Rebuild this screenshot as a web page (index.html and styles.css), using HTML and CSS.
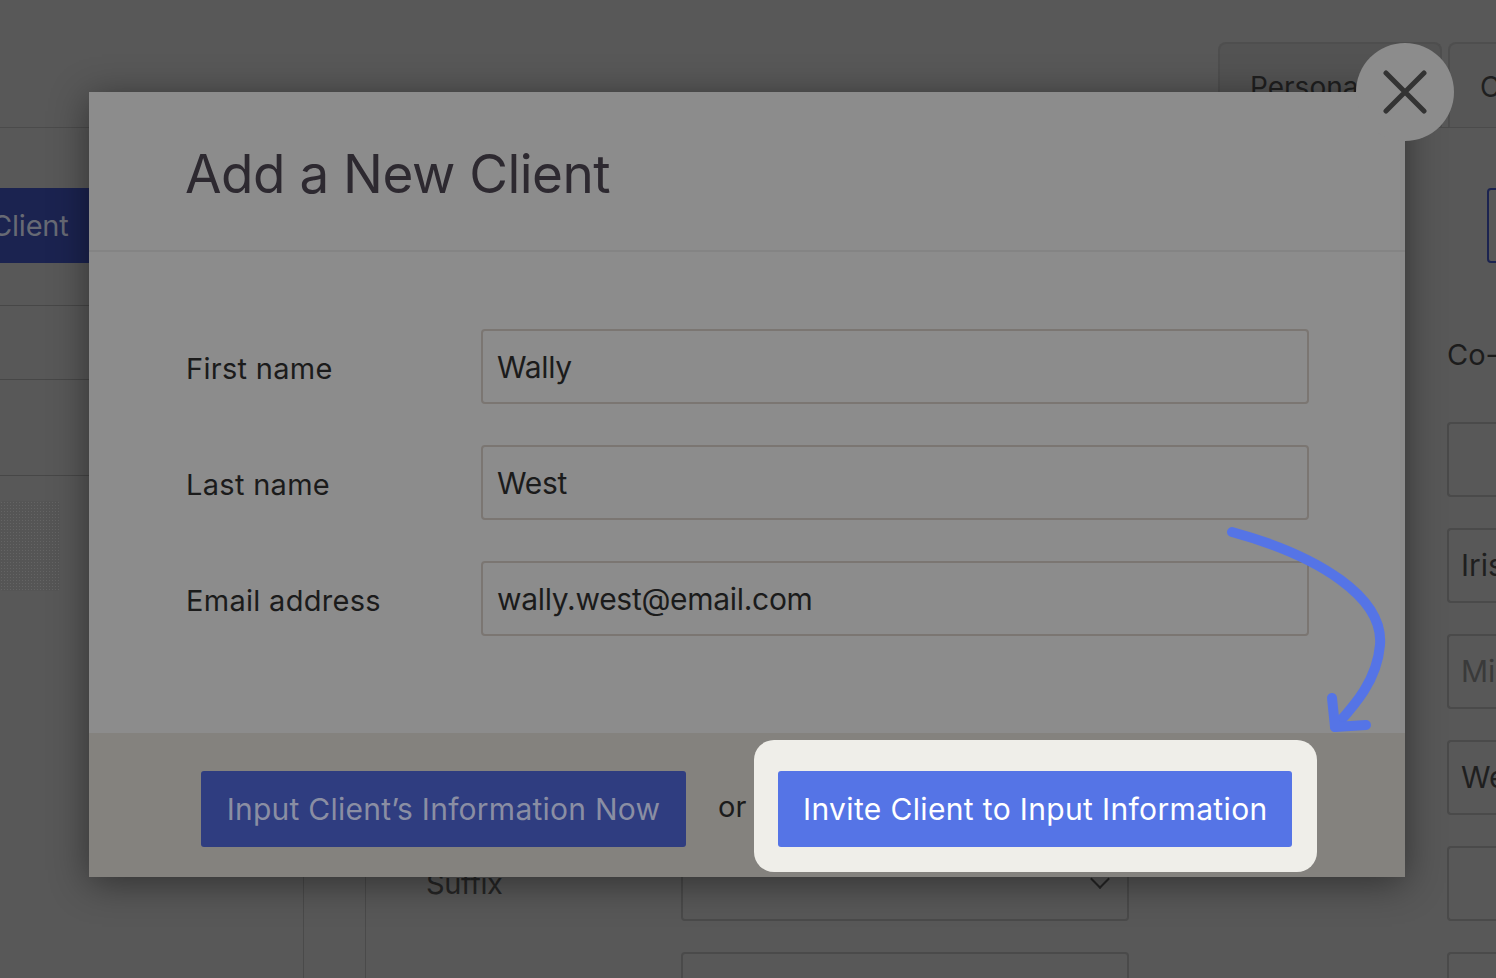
FILE: index.html
```html
<!doctype html>
<html lang="en">
<head>
    <meta charset="UTF-8">
    <meta name="viewport" content="width=device-width, initial-scale=1.0">
    <title>Add a New Client</title>
    <link rel="stylesheet" href="styles.css">
</head>
<body>
<header class="topbar">
    <div class="tabs">
        <div class="tab tab-active">Personal</div>
        <div class="tab">C</div>
    </div>
</header>
<div class="app">
    <aside class="side">
        <div class="side-item side-item-btn"><span class="side-btn">Client</span></div>
        <div class="side-item side-item-a"></div>
        <div class="side-item side-item-b"></div>
        <div class="side-item side-item-c"><div class="dots"></div></div>
    </aside>
    <div class="rail"></div>
    <main class="main">
        <div class="form-col">
            <div class="block"></div>
            <div class="heading"></div>
            <div class="row"><span class="row-label"></span><div class="field"></div></div>
            <div class="row"><span class="row-label"></span><div class="field"></div></div>
            <div class="row"><span class="row-label"></span><div class="field"></div></div>
            <div class="row"><span class="row-label"></span><div class="field"></div></div>
            <div class="row"><span class="row-label">Suffix</span><div class="field select"><span class="chev"></span></div></div>
            <div class="row"><span class="row-label"></span><div class="field select"></div></div>
        </div>
        <div class="co-col">
            <div class="block block-outline"></div>
            <div class="heading">Co-</div>
            <div class="co-field"></div>
            <div class="co-field">Iris</div>
            <div class="co-field co-muted">Mi</div>
            <div class="co-field">We</div>
            <div class="co-field"></div>
            <div class="co-field"></div>
        </div>
    </main>
</div>

<div class="modal">
    <div class="modal-head">
        <h1>Add a New Client</h1>
    </div>
    <div class="modal-body">
        <label class="m-row">
            <span class="m-label">First name</span>
            <span class="m-input">Wally</span>
        </label>
        <label class="m-row">
            <span class="m-label">Last name</span>
            <span class="m-input">West</span>
        </label>
        <label class="m-row">
            <span class="m-label">Email address</span>
            <span class="m-input">wally.west@email.com</span>
        </label>
    </div>
    <div class="modal-foot">
        <button class="btn btn-dark">Input Client’s Information Now</button>
        <span class="or">or</span>
        <div class="spot">
            <button class="btn btn-blue">Invite Client to Input Information</button>
        </div>
    </div>
    <button class="close" aria-label="Close">
        <svg width="44" height="44" viewBox="0 0 44 44">
            <path d="M3 3 L41 41 M41 3 L3 41" stroke="#333" stroke-width="5" stroke-linecap="round" fill="none"/>
        </svg>
    </button>
</div>

<svg class="arrow" width="1496" height="978" viewBox="0 0 1496 978">
    <path d="M1232 532 C1320 556 1384 598 1380 645 C1377 682 1352 708 1335 727"
          stroke="#5574e6" stroke-width="10" stroke-linecap="round" fill="none"/>
    <path d="M1332 698 L1335 727 L1366 725"
          stroke="#5574e6" stroke-width="10" stroke-linecap="round" stroke-linejoin="round" fill="none"/>
</svg>
</body>
</html>
```

FILE: styles.css
```css
html, body {
    margin: 0;
    padding: 0;
}

body {
    width: 1496px;
    height: 978px;
    overflow: hidden;
    position: relative;
    background-color: #585858;
    font-family: Inter, "Open Sans", sans-serif;
    color: #1c1c1c;
}

/* background page (already dimmed) */
.topbar {
    height: 128px;
    box-sizing: border-box;
    border-bottom: 1px solid #4b4b4b;
    overflow: hidden;
}

.tabs {
    display: flex;
    gap: 6px;
    padding: 42px 0 0 1218px;
    height: 100%;
    box-sizing: border-box;
}

.tab {
    flex: none;
    width: 224px;
    box-sizing: border-box;
    padding: 26px 0 0 30px;
    border: 2px solid #4e4e4e;
    border-bottom: none;
    border-radius: 8px 8px 0 0;
    font-size: 28px;
    color: #1f1f1f;
    background-color: #565656;
}

.tab-active {
    background-color: #535353;
}

.app {
    display: flex;
    height: 850px;
}

.side {
    flex: none;
    width: 304px;
    border-right: 1px solid #4a4a4a;
    box-sizing: border-box;
}

.side-item {
    border-bottom: 1px solid #474747;
    box-sizing: border-box;
}

.side-item-btn {
    height: 178px;
    padding-top: 60px;
    overflow: hidden;
}

.side-btn {
    display: block;
    width: 320px;
    height: 75px;
    margin-left: -9px;
    line-height: 75px;
    background-color: #1b2350;
    color: #676a74;
    font-size: 29px;
    letter-spacing: -0.2px;
}

.side-item-a {
    height: 74px;
}

.side-item-b {
    height: 96px;
}

.side-item-c {
    border-bottom: none;
    padding-top: 25px;
}

.dots {
    width: 60px;
    height: 90px;
    border-radius: 4px;
    background-color: #555;
    background-image: radial-gradient(#646464 0.7px, transparent 0.8px);
    background-size: 3px 3px;
}

.rail {
    flex: none;
    width: 61px;
    border-right: 1px solid #4a4a4a;
}

.main {
    flex: 1;
    min-width: 0;
    overflow: hidden;
    display: flex;
    padding-top: 60px;
}

.form-col {
    flex: none;
    width: 764px;
    padding-left: 60px;
    box-sizing: border-box;
    display: flex;
    flex-direction: column;
    gap: 31px;
}

.block {
    height: 75px;
    flex: none;
}

.block-outline {
    width: 100px;
    margin-left: 40px;
    border: 2px solid #1b2350;
    border-radius: 4px;
    box-sizing: border-box;
}

.heading {
    flex: none;
    height: 97px;
    box-sizing: border-box;
    padding-top: 45px;
    font-size: 29px;
    line-height: 32px;
    color: #1c1c1c;
}

.row {
    flex: none;
    display: flex;
    align-items: center;
    height: 75px;
}

.row-label {
    width: 255px;
    font-size: 29px;
    color: #262626;
    letter-spacing: -0.4px;
}

.field {
    width: 448px;
    height: 75px;
    box-sizing: border-box;
    border: 2px solid #4a4a4a;
    border-radius: 4px;
    position: relative;
}

.chev {
    position: absolute;
    right: 20px;
    top: 24px;
    width: 12px;
    height: 12px;
    border-right: 2px solid #262626;
    border-bottom: 2px solid #262626;
    transform: rotate(45deg);
}

.co-col {
    flex: none;
    width: 200px;
    margin-left: 317px;
    display: flex;
    flex-direction: column;
    gap: 31px;
}

.co-field {
    flex: none;
    height: 75px;
    box-sizing: border-box;
    border: 2px solid #4a4a4a;
    border-right: none;
    border-radius: 4px 0 0 4px;
    padding-left: 12px;
    font-size: 30px;
    line-height: 71px;
    color: #1f1f1f;
}

.co-muted {
    color: #3a3a3a;
}

/* modal */
.modal {
    position: absolute;
    left: 89px;
    top: 92px;
    width: 1316px;
    height: 785px;
    display: flex;
    flex-direction: column;
    background-color: #8c8c8c;
    box-shadow: 0 6px 36px rgba(0, 0, 0, 0.45);
}

.modal-head {
    height: 160px;
    box-sizing: border-box;
    padding: 50px 0 0 96px;
    border-bottom: 2px solid #848484;
}

.modal-head h1 {
    margin: 0;
    font-size: 53px;
    font-weight: 400;
    letter-spacing: -0.5px;
    color: #2d2930;
}

.modal-body {
    flex: 1;
    padding: 77px 0 0 97px;
    display: flex;
    flex-direction: column;
    gap: 41px;
}

.m-row {
    display: flex;
    align-items: center;
}

.m-label {
    width: 295px;
    padding-top: 3px;
    font-size: 29px;
    letter-spacing: 0.3px;
    color: #1b1b1b;
}

.m-input {
    width: 828px;
    height: 75px;
    box-sizing: border-box;
    padding-left: 14px;
    border: 2px solid #7b7672;
    border-radius: 4px;
    font-size: 30px;
    line-height: 73px;
    letter-spacing: -0.3px;
    color: #1b1b1b;
}

.modal-foot {
    height: 144px;
    box-sizing: border-box;
    padding: 38px 0 0 112px;
    display: flex;
    align-items: flex-start;
    background-color: #84827e;
}

.btn {
    height: 76px;
    border: none;
    border-radius: 3px;
    font-family: inherit;
    font-size: 30px;
    letter-spacing: 0.25px;
    padding: 0;
}

.btn-dark {
    width: 485px;
    background-color: #2f3d80;
    color: #8a8ea3;
}

.or {
    margin: 0 8px 0 32px;
    font-size: 29px;
    line-height: 72px;
    color: #1b1b1b;
}

.spot {
    margin-top: -31px;
    padding: 31px 25px 25px 24px;
    border-radius: 20px;
    background-color: #efeee9;
}

.btn-blue {
    width: 514px;
    display: block;
    letter-spacing: 0.35px;
    background-color: #5574e6;
    color: #fff;
}

.close {
    position: absolute;
    right: -49px;
    top: -49px;
    width: 98px;
    height: 98px;
    border: none;
    border-radius: 50%;
    background-color: #8c8c8c;
    display: flex;
    align-items: center;
    justify-content: center;
    padding: 0;
}

.arrow {
    position: absolute;
    left: 0;
    top: 0;
    pointer-events: none;
}
```
